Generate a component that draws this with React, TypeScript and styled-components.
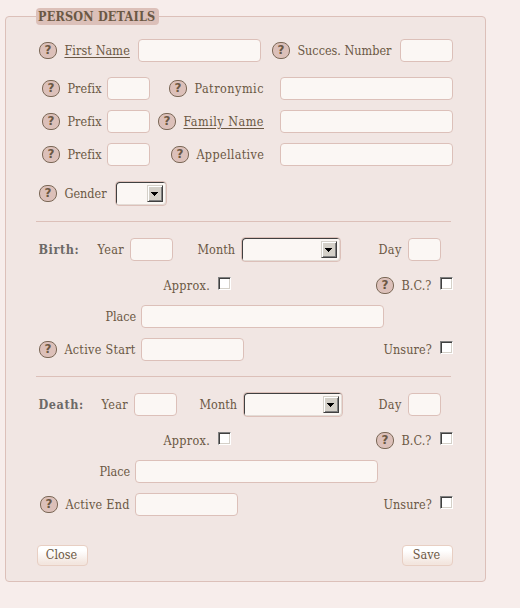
import React from "react";
import styled, { createGlobalStyle, css } from "styled-components";

const Global = createGlobalStyle`
  * { box-sizing: border-box; }
  body {
    margin: 0;
    background: #f7edeb;
    color: #6b5844;
    font: 12.5px/17px "DejaVu Serif Condensed", "DejaVu Serif", serif;
  }
`;

const Page = styled.main`
  padding: 16px 0 0 5px;
  width: 520px;
  height: 608px;
  overflow: hidden;
`;

const Panel = styled.section`
  width: 481px;
  height: 566px;
  padding: 0 0 0 30px;
  border: 1px solid #dcc0b9;
  border-radius: 4px;
  background: #f1e6e3;
`;

const Title = styled.h1`
  width: 123px;
  height: 17px;
  margin: -9px 0 0;
  padding-left: 2px;
  border-radius: 4px;
  background: #dcc0b9;
  font-size: 12.5px;
  line-height: 17px;
  font-weight: bold;
  letter-spacing: 0.2px;
  white-space: nowrap;
`;

const Row = styled.div<{ $top: number; $h?: number; $align?: string }>`
  display: flex;
  align-items: ${(p) => p.$align ?? "center"};
  height: ${(p) => p.$h ?? 23}px;
  margin-top: ${(p) => p.$top}px;
`;

type Placed = { $gap: number };
const placed = css<Placed>`
  flex: none;
  margin-left: ${(p) => p.$gap}px;
`;

const Label = styled.label<Placed & { $w: number; $track?: number; $underline?: boolean }>`
  ${placed}
  width: ${(p) => p.$w}px;
  height: 17px;
  letter-spacing: ${(p) => p.$track ?? 0}px;
  white-space: nowrap;
  text-indent: -0.6px;
  text-decoration: ${(p) => (p.$underline ? "underline" : "none")};
  text-underline-offset: 2px;
`;

const Heading = styled.strong<Placed & { $w: number; $track?: number }>`
  ${placed}
  width: ${(p) => p.$w}px;
  color: #6c6967;
  letter-spacing: ${(p) => p.$track ?? 0}px;
  text-indent: -0.5px;
  white-space: nowrap;
`;

const Field = styled.input<Placed & { $w: number }>`
  ${placed}
  width: ${(p) => p.$w}px;
  height: 23px;
  padding: 0 4px;
  border: 1px solid #dcc0b9;
  border-radius: 4px;
  background: #fbf7f4;
  outline: none;
`;

const HelpButton = styled.button<Placed>`
  ${placed}
  width: 18px;
  height: 17px;
  padding: 0;
  border: 1px solid #7b6857;
  border-radius: 8px;
  background: #dcc0b9;
  color: #6b5844;
  font: bold 12px/15px "DejaVu Sans", sans-serif;
  text-align: center;
`;

const Help = (p: Placed) => <HelpButton {...p}>?</HelpButton>;

const Check = styled.input.attrs({ type: "checkbox" })<Placed>`
  ${placed}
  appearance: none;
  width: 13px;
  height: 13px;
  margin-top: 0;
  margin-right: 0;
  margin-bottom: 0;
  border: 1px solid;
  border-color: #808080 #fff #fff #808080;
  background: #fff;
  box-shadow: inset 1px 1px #404040, inset -1px -1px #d4d0c8;
`;

const SelectBox = styled.div<Placed & { $w: number }>`
  ${placed}
  display: flex;
  justify-content: flex-end;
  width: ${(p) => p.$w}px;
  height: 25px;
  padding: 3px 3px 0 0;
  border: 1px solid #dcc0b9;
  border-radius: 4px;
  background: #fbf7f4;
  box-shadow: inset 1px 1px #404040, inset -1px -1px #e3dcd6;
`;

const SelectArrow = styled.span`
  display: flex;
  align-items: center;
  justify-content: center;
  width: 16px;
  height: 17px;
  padding-right: 1px;
  background: #d4d0c8;
  border: 1px solid;
  border-color: #d4d0c8 #404040 #404040 #d4d0c8;
  box-shadow: inset 1px 1px #fff, inset -1px -1px #808080;
`;

const Select = (p: Placed & { $w: number }) => (
  <SelectBox {...p}>
    <SelectArrow>
      <svg width="7" height="4" viewBox="0 0 7 4" shapeRendering="crispEdges">
        <path d="M0 0h7v1H0zM1 1h5v1H1zM2 2h3v1H2zM3 3h1v1H3z" fill="#000" />
      </svg>
    </SelectArrow>
  </SelectBox>
);

const Divider = styled.hr<{ $top: number }>`
  width: 415px;
  height: 1px;
  margin: ${(p) => p.$top}px 0 0;
  border: 0;
  background: #dcc0b9;
`;

const ActionButton = styled.button<Placed>`
  ${placed}
  width: 51px;
  height: 21px;
  padding: 0 2px 2px 0;
  border: 1px solid #e8cfc3;
  border-radius: 4px;
  background: linear-gradient(#fff 25%, #f3e6df 90%);
  color: #6b5844;
  font: inherit;
`;

export default function App() {
  return (
    <>
      <Global />
      <Page>
        <Panel>
          <Title>PERSON DETAILS</Title>

          <Row $top={14}>
            <Help $gap={3} />
            <Label $gap={8} $w={65} $track={0.1} $underline>First Name</Label>
            <Field $gap={8} $w={123} />
            <Help $gap={11} />
            <Label $gap={8} $w={94}>Succes. Number</Label>
            <Field $gap={8} $w={53} />
          </Row>

          <Row $top={15}>
            <Help $gap={6} />
            <Label $gap={8} $w={34} $track={0.1}>Prefix</Label>
            <Field $gap={5} $w={43} />
            <Help $gap={19} />
            <Label $gap={8} $w={69} $track={0.5}>Patronymic</Label>
            <Field $gap={16} $w={173} />
          </Row>
          <Row $top={10}>
            <Help $gap={6} />
            <Label $gap={8} $w={34} $track={0.1}>Prefix</Label>
            <Field $gap={5} $w={43} />
            <Help $gap={8} />
            <Label $gap={8} $w={80} $track={0.48} $underline>Family Name</Label>
            <Field $gap={16} $w={173} />
          </Row>
          <Row $top={10}>
            <Help $gap={6} />
            <Label $gap={8} $w={34} $track={0.1}>Prefix</Label>
            <Field $gap={5} $w={43} />
            <Help $gap={21} />
            <Label $gap={8} $w={67} $track={0.33}>Appellative</Label>
            <Field $gap={16} $w={173} />
          </Row>

          <Row $top={15} $h={25}>
            <Help $gap={3} />
            <Label $gap={8} $w={41}>Gender</Label>
            <Select $gap={9} $w={52} />
          </Row>

          <Divider $top={15} />

          <Row $top={15} $h={25}>
            <Heading $gap={3} $w={40} $track={0.6}>Birth:</Heading>
            <Label $gap={19} $w={27} $track={0.4}>Year</Label>
            <Field $gap={5} $w={43} />
            <Label $gap={25} $w={37} $track={0.1}>Month</Label>
            <Select $gap={6} $w={100} />
            <Label $gap={38} $w={24} $track={0.4}>Day</Label>
            <Field $gap={5} $w={33} />
          </Row>
          <Row $top={15} $h={17} $align="flex-start">
            <Label $gap={128} $w={46} $track={0.3}>Approx.</Label>
            <Check $gap={8} />
            <Help $gap={145} />
            <Label $gap={8} $w={30} $track={0.1}>B.C.?</Label>
            <Check $gap={8} />
          </Row>
          <Row $top={11}>
            <Label $gap={70} $w={30}>Place</Label>
            <Field $gap={5} $w={243} />
          </Row>
          <Row $top={10}>
            <Help $gap={3} />
            <Label $gap={8} $w={71} $track={0.27}>Active Start</Label>
            <Field $gap={5} $w={103} />
            <Label $gap={140} $w={48} $track={0.1}>Unsure?</Label>
            <Row $top={0} $h={17} $align="flex-start"><Check $gap={8} /></Row>
          </Row>

          <Divider $top={15} />

          <Row $top={15} $h={25}>
            <Heading $gap={3} $w={44} $track={0.6}>Death:</Heading>
            <Label $gap={19} $w={27} $track={0.4}>Year</Label>
            <Field $gap={5} $w={43} />
            <Label $gap={23} $w={37} $track={0.1}>Month</Label>
            <Select $gap={6} $w={100} />
            <Label $gap={36} $w={24} $track={0.4}>Day</Label>
            <Field $gap={5} $w={33} />
          </Row>
          <Row $top={15} $h={17} $align="flex-start">
            <Label $gap={128} $w={46} $track={0.3}>Approx.</Label>
            <Check $gap={8} />
            <Help $gap={145} />
            <Label $gap={8} $w={30} $track={0.1}>B.C.?</Label>
            <Check $gap={8} />
          </Row>
          <Row $top={11}>
            <Label $gap={64} $w={30}>Place</Label>
            <Field $gap={5} $w={243} />
          </Row>
          <Row $top={10}>
            <Help $gap={4} />
            <Label $gap={8} $w={64} $track={0.25}>Active End</Label>
            <Field $gap={5} $w={103} />
            <Label $gap={146} $w={48} $track={0.1}>Unsure?</Label>
            <Row $top={0} $h={17} $align="flex-start"><Check $gap={8} /></Row>
          </Row>

          <Row $top={29} $h={21}>
            <ActionButton $gap={1}>Close</ActionButton>
            <ActionButton $gap={314}>Save</ActionButton>
          </Row>
        </Panel>
      </Page>
    </>
  );
}
